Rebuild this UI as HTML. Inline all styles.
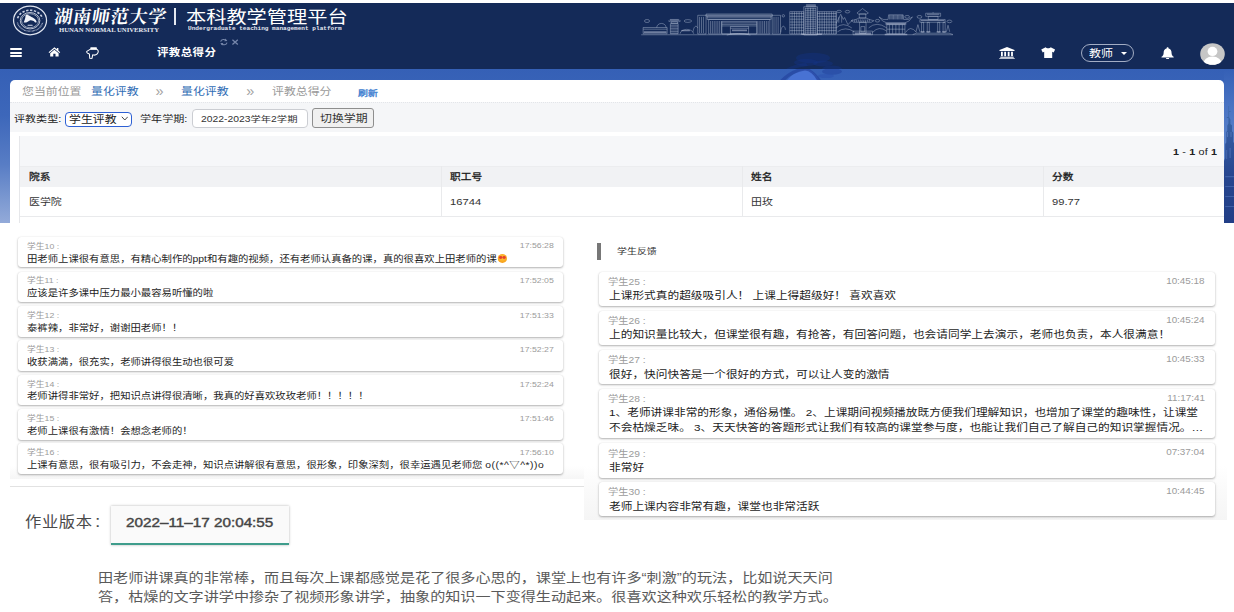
<!DOCTYPE html>
<html lang="zh-CN">
<head>
<meta charset="utf-8">
<title>评教总得分</title>
<style>
*{box-sizing:border-box;margin:0;padding:0}
html{background:#fff}html,body{width:1234px;height:612px;overflow:hidden}
body{position:relative;font-family:"Liberation Sans","Noto Sans CJK SC",sans-serif;color:#222}
.abs{position:absolute}
#hdr{left:0;top:3px;width:1234px;height:66px;background:#142a58;overflow:hidden}
#bluebg{left:0;top:69px;width:1234px;height:154px;background:linear-gradient(180deg,#3560b6 0%,#3d67ba 30%,#587dc5 62%,#7c99d1 85%,#93aad9 100%)}
#rightimg{left:1224px;top:69px;width:10px;height:154px;background:linear-gradient(180deg,#3a66ba 0%,#2f58a8 30%,#27509f 60%,#3159a8 100%)}
#card{left:10px;top:80px;width:1214px;height:143px;background:#fff;border-radius:5px 5px 0 0;overflow:hidden}
.t{position:absolute;white-space:nowrap;line-height:1}

.c{position:absolute;background:#fff;border-radius:3px;box-shadow:0 1px 2.2px rgba(0,0,0,.3),0 0 1px rgba(0,0,0,.12)}
.c .l{position:absolute;white-space:nowrap;line-height:1;color:#9b9b9b}
.c .m{position:absolute;white-space:nowrap;line-height:1;color:#1c1c1c}
.c .tm{position:absolute;white-space:nowrap;line-height:1;color:#9b9b9b;text-align:right}
.L .l{left:9px;top:5.75px;font-size:7.7px;transform:scaleX(1.14);transform-origin:0 50%}
.L .m{left:9px;top:17.3px;font-size:9.09px;transform:scaleX(1.14);transform-origin:0 50%}
.L .tm{right:9px;top:5.6px;font-size:7.65px;transform:scaleX(1.14);transform-origin:100% 50%}
.R .l{left:9.9px;top:6.6px;font-size:8.7px;transform:scaleX(1.18);transform-origin:0 50%}
.R .m{left:10.5px;top:19.79px;font-size:9.92px;transform:scaleX(1.18);transform-origin:0 50%}
.R .tm{right:10.2px;top:5.4px;font-size:8.4px;transform:scaleX(1.18);transform-origin:100% 50%}
.emo{display:inline-block;position:relative;width:8.6px;height:8.4px;border-radius:50%;background:radial-gradient(circle at 50% 40%,#ffc83a 0%,#f8a21c 70%,#ee8d10 100%);vertical-align:-0.6px;margin-left:.6px}
.emo i{position:absolute;top:1.6px;width:3px;height:2.8px;background:#e4402f;border-radius:50% 50% 50% 50%}
.emo i:first-child{left:1px}.emo i:last-child{right:1px}
</style>
</head>
<body>
<div id="hdr" class="abs">
<!-- logo -->
<svg class="abs" style="left:12px;top:1px;width:36px;height:32px" viewBox="0 0 36 32">
<ellipse cx="18.05" cy="16.45" rx="16.5" ry="14.3" fill="none" stroke="#dfe4ef" stroke-width="1.25"/>
<ellipse cx="18.05" cy="16.5" rx="13.2" ry="11.3" fill="none" stroke="#cfd6e6" stroke-width="1.5" stroke-dasharray="2.1 1.1" stroke-dashoffset="1" pathLength="100" opacity=".0"/>
<path d="M5.6 14.2A13 11.2 0 0 1 30.5 14.2" fill="none" stroke="#c9d0e2" stroke-width="1.6" stroke-dasharray="2.4 1.5"/>
<path d="M5.4 18.6A13 11.2 0 0 0 30.7 18.6" fill="none" stroke="#b9c2d8" stroke-width="1.3" stroke-dasharray=".7 .6"/>
<ellipse cx="18.05" cy="16.7" rx="9.8" ry="8.2" fill="none" stroke="#e3e7f1" stroke-width=".8"/>
<ellipse cx="18.05" cy="16.7" rx="8.5" ry="7" fill="none" stroke="#dbe0ec" stroke-width=".6"/>
<path d="M13 11.4L13.6 10.7C14.4 10.2 15.4 10.3 16.2 10.8C17.4 11.3 18.6 12.2 19.6 12.8C21.4 13.7 23.2 14.6 24.2 15.8C24.9 16.7 25.3 17.8 25.4 18.7L23.6 19C23.2 18 22.4 17.2 21.3 16.9C20.3 16.4 19.3 16.2 18.3 16.4C17.2 16.8 16.2 17.5 15.4 18.1L13.7 19H11C11.1 18 11.5 17.1 11.9 16.3C12.3 15.3 12.6 14.3 12.8 13.4Z" fill="#f0f2f8" transform="translate(18.2 14.8) scale(.9) translate(-18.2 -14.8)"/>
<rect x="15.6" y="20.7" width="5" height="1.1" rx=".3" fill="#d9deeb"/>
</svg>
<div class="t" style="left:53px;top:4.9px;font-family:'Liberation Serif','Noto Serif CJK SC',serif;font-weight:700;font-size:18px;letter-spacing:.75px;color:#fff;transform:skewX(-9deg);transform-origin:0 100%">湖南师范大学</div>
<div class="t" style="left:59px;top:25.1px;font-family:'Liberation Serif',serif;font-weight:700;font-size:5.7px;color:#e6e9f2;transform:scaleX(1.176);transform-origin:0 0">HUNAN NORMAL UNIVERSITY</div>
<div class="abs" style="left:174.3px;top:4.8px;width:2px;height:16.8px;background:#e4e8f0"></div>
<div class="t" style="left:185.8px;top:7.1px;font-size:16.8px;color:#fff;font-weight:400;transform:scaleX(1.204);transform-origin:0 50%">本科教学管理平台</div>
<div class="t" style="left:188px;top:24.11px;font-family:'Liberation Mono',monospace;font-weight:700;font-size:5.08px;color:#e6e9f2;transform:scaleX(1.2);transform-origin:0 50%">Undergraduate teaching management platform</div>
<!-- hamburger -->
<div class="abs" style="left:10.2px;top:45.2px;width:12px;height:1.9px;background:#fff;border-radius:1px"></div>
<div class="abs" style="left:10.2px;top:48.75px;width:12px;height:1.9px;background:#fff;border-radius:1px"></div>
<div class="abs" style="left:10.2px;top:52.3px;width:12px;height:1.9px;background:#fff;border-radius:1px"></div>
<!-- home -->
<svg class="abs" style="left:47.8px;top:44.4px;width:12.8px;height:9.8px" viewBox="0 0 26 21">
<path d="M13 0.5 L0.5 11 L2.2 13 L13 4 L23.8 13 L25.5 11 L21.5 7.6 V2 H18.3 V4.9 Z" fill="#fff"/>
<path d="M13 6 L4 13.5 V20.5 H10.6 V14.5 H15.4 V20.5 H22 V13.5 Z" fill="#fff"/>
</svg>
<!-- hand-o-down -->
<svg class="abs" style="left:86.4px;top:43.7px;width:13px;height:12.6px" viewBox="0 0 26 25">
<path d="M9 4.2 L1.6 8.6 C0.8 10.4 2.4 12.6 5.4 13 L6.8 14.2 L7.4 21.5 C7.8 24.2 11.6 24.2 12.2 21.5 L13.4 15.6 C16.5 16.6 20 16 22.4 13.6 C24.4 11.6 24.8 8.6 24 6.6 L21.4 4.2 Z" fill="none" stroke="#fff" stroke-width="2.1" stroke-linejoin="round"/>
<rect x="8.8" y="0.6" width="12.8" height="4.2" rx="0.8" fill="#fff"/>
</svg>
<div class="t" style="left:157px;top:45.26px;font-size:10px;letter-spacing:0.3px;font-weight:700;color:#fff;transform:scaleX(1.15);transform-origin:0 50%">评教总得分</div>
<!-- refresh + close -->
<svg class="abs" style="left:219px;top:35.2px;width:21.5px;height:8.2px" viewBox="0 0 40 15">
<path d="M3 6.5 A6 5 0 0 1 14 5 M15 8.5 A6 5 0 0 1 4 10" fill="none" stroke="#7686aa" stroke-width="2"/>
<path d="M12 1 L15.5 5.5 L10 6 Z M6 14 L2.5 9.5 L8 9 Z" fill="#7686aa"/>
<path d="M25 3 L35 12 M35 3 L25 12" stroke="#7686aa" stroke-width="2.4"/>
</svg>
<!--SKY0--><svg class="abs" style="left:636px;top:-3px;width:322px;height:42px" viewBox="636 0 322 42"><path d="M641.19 34.76L952.94 34.76M644.42 21.01A2.6 1.5 0 1 0 649.62 21.01A2.6 1.5 0 1 0 644.42 21.01ZM643.13 27.5H667.13V33.72H643.13ZM643.13 29.18L667.13 29.18M656.75 27.5A4.6 4 0 0 1 666.09 27.5M670.37 23.61H678.15V33.72H670.37ZM670.37 25.29L678.15 25.29M670.37 26.85L678.15 26.85M670.37 28.4L678.15 28.4M670.37 29.96L678.15 29.96M670.37 31.52L678.15 31.52M670.37 33.07L678.15 33.07M668.17 20.75L669.98 21.79H678.8L680.88 20.75M669.98 19.46H678.8M671.28 21.79H677.5V23.61H671.28ZM684.08 21.01A3.8 1.4 0 1 0 691.68 21.01A3.8 1.4 0 1 0 684.08 21.01ZM680.1 33.72C680.75 27.89 692.42 27.89 693.72 33.72M693.07 31.78C693.72 25.29 696.96 25.29 697.61 27.89M697.74 15.3H706.04V33.98H697.74ZM772.19 15.3H780.49V33.98H772.19ZM699.55 16.86L699.55 33.07M701.5 16.86L701.5 33.07M703.44 16.86L703.44 33.07M774.0 16.86L774.0 33.07M776.08 16.86L776.08 33.07M778.15 16.86L778.15 33.07M706.04 14.01H772.19V16.08H706.04ZM706.04 15.05L772.19 15.05M707.08 16.08H771.15V19.46H707.08ZM707.08 17.77L771.15 17.77M708.63 19.46H769.85V33.98H708.63ZM710.58 21.01L710.58 33.46M712.39 21.01L712.39 33.46M714.21 21.01L714.21 33.46M716.03 21.01L716.03 33.46M717.84 21.01L717.84 33.46M719.66 21.01L719.66 33.46M721.47 21.01L721.47 33.46M757.27 21.01L757.27 33.46M759.09 21.01L759.09 33.46M760.9 21.01L760.9 33.46M762.72 21.01L762.72 33.46M764.53 21.01L764.53 33.46M766.35 21.01L766.35 33.46M768.17 21.01L768.17 33.46M721.86 21.4H756.62V33.98H721.86ZM721.86 22.83L756.62 22.83M721.86 24.38L756.62 24.38M721.86 25.94L756.62 25.94M730.42 26.46H748.58V33.98H730.42ZM730.42 28.27L748.58 28.27M726.79 35.02Q738.46 31.91 750.4 35.02M782.14 15.82A1.2 1.2 0 1 0 784.5400000000001 15.82A1.2 1.2 0 1 0 782.14 15.82ZM780.75 32.43C781.27 24.64 784.9 24.64 785.42 29.83M789.77 11.67H803.78V33.98H789.77ZM817.4 11.67H836.21V33.98H817.4ZM803.78 6.74H817.4V35.02H803.78ZM806.38 4.67H815.46V6.74H806.38ZM789.77 13.49L803.78 13.49M817.4 13.49L836.21 13.49M789.77 16.34L803.78 16.34M817.4 16.34L836.21 16.34M789.77 19.2L803.78 19.2M817.4 19.2L836.21 19.2M789.77 22.05L803.78 22.05M817.4 22.05L836.21 22.05M789.77 24.9L803.78 24.9M817.4 24.9L836.21 24.9M789.77 27.76L803.78 27.76M817.4 27.76L836.21 27.76M789.77 30.61L803.78 30.61M817.4 30.61L836.21 30.61M792.11 11.67L792.11 33.98M794.44 11.67L794.44 33.98M796.78 11.67L796.78 33.98M799.11 11.67L799.11 33.98M801.45 11.67L801.45 33.98M819.74 11.67L819.74 33.98M822.07 11.67L822.07 33.98M824.4 11.67L824.4 33.98M826.74 11.67L826.74 33.98M829.07 11.67L829.07 33.98M831.41 11.67L831.41 33.98M833.74 11.67L833.74 33.98M836.08 11.67L836.08 33.98M805.34 8.56L815.84 8.56M805.34 10.38L815.84 10.38M805.34 12.19L815.84 12.19M805.34 14.01L815.84 14.01M805.34 15.82L815.84 15.82M805.34 17.64L815.84 17.64M805.34 19.46L815.84 19.46M805.34 21.27L815.84 21.27M805.34 23.09L815.84 23.09M805.34 24.9L815.84 24.9M805.34 26.72L815.84 26.72M805.34 28.53L815.84 28.53M805.34 30.35L815.84 30.35M805.34 32.17L815.84 32.17M805.34 7.78L805.34 33.98M807.93 7.78L807.93 33.98M810.53 7.78L810.53 33.98M813.12 7.78L813.12 33.98M815.84 7.78L815.84 33.98M836.76 11.41A2.3 1.1 0 1 0 841.3599999999999 11.41A2.3 1.1 0 1 0 836.76 11.41ZM845.19 11.67A2.3 1.3 0 1 0 849.79 11.67A2.3 1.3 0 1 0 845.19 11.67ZM836.21 23.35L840.75 14.27L843.34 19.46L844.64 17.51L847.88 24.64L853.07 19.46M836.21 27.89Q842.69 21.4 851.77 27.89M837.5 31.78Q845.29 25.94 854.37 31.78M838.8 16.86L838.8 22.7M841.65 16.21L841.65 22.7M862.54 8.56L856.96 12.97L858.26 14.01H866.82L868.37 12.97ZM859.29 14.01H865.78V18.16H859.29ZM851.12 20.75Q856.96 19.46 859.29 17.9H865.78Q868.63 19.46 873.82 20.75L871.23 22.31H853.85ZM855.01 19.46L854.5 22.05M856.83 19.46L856.31 22.05M858.65 19.46L858.13 22.05M860.46 19.46L859.94 22.05M862.28 19.46L861.76 22.05M864.09 19.46L863.57 22.05M865.91 19.46L865.39 22.05M867.73 19.46L867.21 22.05M869.54 19.46L869.02 22.05M859.55 22.31H866.04V33.46H859.55ZM860.85 26.59H864.74V31.78H860.85ZM853.07 31.13H872.52V34.76H853.07ZM868.63 27.89Q876.42 20.75 886.79 27.89M872.52 32.43Q879.01 25.29 886.79 31.13M875.25 20.75A2.2 1.3 0 1 0 879.6500000000001 20.75A2.2 1.3 0 1 0 875.25 20.75ZM879.01 16.86Q882.25 22.05 886.79 22.83H904.95Q909.49 22.05 912.47 16.86Q908.84 20.75 903.65 19.46L903.13 14.79H888.61L888.09 19.46Q882.64 20.75 879.01 16.86ZM889.64 15.05L889.64 19.46M890.94 15.05L890.94 19.46M892.24 15.05L892.24 19.46M893.54 15.05L893.54 19.46M894.83 15.05L894.83 19.46M896.13 15.05L896.13 19.46M897.43 15.05L897.43 19.46M898.72 15.05L898.72 19.46M900.02 15.05L900.02 19.46M901.32 15.05L901.32 19.46M902.61 15.05L902.61 19.46M886.79 24.64H904.95V33.72H886.79ZM889.39 24.64L889.39 33.72M892.63 24.64L892.63 33.72M895.87 24.64L895.87 33.72M899.11 24.64L899.11 33.72M902.36 24.64L902.36 33.72M886.79 29.18L904.95 29.18M904.75 16.86A2.4 1.4 0 1 0 909.55 16.86A2.4 1.4 0 1 0 904.75 16.86ZM905.6 32.43Q910.14 24.64 916.62 32.43M917.08 16.86A2.4 1.4 0 1 0 921.88 16.86A2.4 1.4 0 1 0 917.08 16.86ZM947.0400000000001 21.4A2.4 1.3 0 1 0 951.84 21.4A2.4 1.3 0 1 0 947.0400000000001 21.4ZM925.7 13.23H940.62V16.34H925.7ZM933.09 12.19L933.09 13.23M928.3 16.34H938.02V19.46H928.3ZM919.87 19.46H945.16V22.31H919.87ZM921.55 22.31H923.63V32.17H921.55ZM927.26 22.31H929.33V32.17H927.26ZM937.63 22.31H939.71V32.17H937.63ZM943.08 22.31H945.16V32.17H943.08ZM912.73 34.5L916.62 33.2H949.05L952.94 34.5M915.97 31.78L917.92 24.64L919.87 31.78M946.45 31.78L948.01 25.29L949.7 31.78" fill="none" stroke="#c9d2e6" stroke-opacity=".7" stroke-width=".55"/><path d="M643.78 31.13H666.48V32.94H643.78ZM669.46 19.71H679.58V20.75H669.46ZM681.4 30.09H689.83V31.13H681.4ZM731.98 29.57H747.02V31.13H731.98ZM806.89 5.19H814.94V6.23H806.89ZM801.19 33.46H821.94V35.02H801.19ZM854.63 32.43H871.23V34.5H854.63ZM885.49 22.83H906.25V24.64H885.49ZM884.72 33.72H907.28V35.28H884.72ZM927.0 13.75H939.32V14.79H927.0ZM920.77 19.97H944.38V21.01H920.77ZM920.51 31.13H924.66V32.43H920.51ZM926.22 31.13H930.37V32.43H926.22ZM936.6 31.13H940.75V32.43H936.6ZM942.04 31.13H946.19V32.43H942.04Z" fill="#c9d2e6" fill-opacity=".5"/></svg><!--SKY1-->
<!-- bank -->
<svg class="abs" style="left:999px;top:43.5px;width:16px;height:12.5px" viewBox="0 0 32 25">
<path d="M16 0 L1 6 V8 H31 V6 Z" fill="#fff"/>
<rect x="4" y="9.5" width="3.6" height="9" fill="#fff"/><rect x="10.5" y="9.5" width="3.6" height="9" fill="#fff"/><rect x="17.5" y="9.5" width="3.6" height="9" fill="#fff"/><rect x="24.2" y="9.5" width="3.6" height="9" fill="#fff"/>
<rect x="2.5" y="19.5" width="27" height="2" fill="#fff"/><rect x="0.5" y="22.6" width="31" height="2.2" fill="#fff"/>
</svg>
<!-- shirt -->
<svg class="abs" style="left:1041px;top:43.8px;width:14.4px;height:11.6px" viewBox="0 0 29 23">
<path d="M9.5 0.5 C11 3.2 18 3.2 19.5 0.5 L28.5 5 L25.5 10.8 L22.6 9.5 V22.5 H6.4 V9.5 L3.5 10.8 L0.5 5 Z" fill="#fff"/>
</svg>
<!-- role pill -->
<div class="abs" style="left:1081px;top:41px;width:53px;height:17.6px;border:1.6px solid #a3adc4;border-radius:9px"></div>
<div class="t" style="left:1088.5px;top:45.60px;font-size:10px;color:#fff;transform:scaleX(1.2);transform-origin:0 50%">教师</div>
<div class="abs" style="left:1120.5px;top:48.6px;width:0;height:0;border-left:3.3px solid transparent;border-right:3.3px solid transparent;border-top:3.6px solid #fff"></div>
<!-- bell -->
<svg class="abs" style="left:1160.5px;top:43.6px;width:13.2px;height:12.8px" viewBox="0 0 26 25">
<path d="M13 0.5 C14.2 0.5 15 1.4 15 2.6 C19 3.6 20.8 7 20.8 11 C20.8 15.5 22.5 17.5 25 19.3 V20.6 H1 V19.3 C3.5 17.5 5.2 15.5 5.2 11 C5.2 7 7 3.6 11 2.6 C11 1.4 11.8 0.5 13 0.5 Z" fill="#fff"/>
<path d="M10 21.8 H16 C16 23.6 14.7 24.7 13 24.7 C11.3 24.7 10 23.6 10 21.8 Z" fill="#fff"/>
</svg>
<!-- avatar -->
<svg class="abs" style="left:1199.6px;top:40px;width:25px;height:22px" viewBox="0 0 25 22">
<defs><clipPath id="avc"><ellipse cx="12.5" cy="11" rx="12.3" ry="10.8"/></clipPath></defs>
<ellipse cx="12.5" cy="11" rx="12.3" ry="10.8" fill="#c6c6c6"/>
<g clip-path="url(#avc)"><ellipse cx="12.5" cy="8.4" rx="4.9" ry="4.6" fill="#fff"/><ellipse cx="12.5" cy="21.5" rx="9.4" ry="8" fill="#fff"/></g>
</svg>
</div>
<div id="bluebg" class="abs"></div>
<svg id="rightimg" class="abs" style="left:1224px;top:69px;width:10px;height:154px" viewBox="1224 69 10 154">
<defs><linearGradient id="skyg" x1="0" y1="0" x2="0" y2="1"><stop offset="0" stop-color="#3560b6"/><stop offset=".25" stop-color="#4a74c3"/><stop offset=".5" stop-color="#5b83cb"/><stop offset="1" stop-color="#6a8fd0"/></linearGradient>
<linearGradient id="twg" x1="0" y1="0" x2="0" y2="1"><stop offset="0" stop-color="#3f6cab"/><stop offset=".3" stop-color="#31569d"/><stop offset=".6" stop-color="#27468f"/><stop offset="1" stop-color="#223e86"/></linearGradient></defs>
<rect x="1224" y="69" width="10" height="154" fill="url(#skyg)"/>
<path d="M1228.4 106h.7v5h1.6v.8h-1.6v5.5l1.3 2.2v4.5l1.6 1.2v6l1.2 1.4v9.5l.8 1V223H1224v-62l1.2-3v-14l1.1-1.5v-10.5l1-1.2v-5.2l1.1-2.2v-5.5h-1.6v-.8h1.6z" fill="url(#twg)"/>
<path d="M1226 150h1.2v9H1226zM1229.4 148h1.5v10h-1.5zM1225.2 176h8.8v1.2h-8.8zM1225.2 186h8.8v1h-8.8zM1225.2 196h8.8v1h-8.8zM1225.2 206h8.8v1h-8.8z" fill="#486bb2" fill-opacity=".7"/>
<path d="M1227 132h1v5h-1zM1230.5 132h1v5h-1z" fill="#5578be" fill-opacity=".8"/>
</svg>
<svg class="abs" style="left:776px;top:48px;width:72px;height:33px;z-index:1" viewBox="776 48 72 33">
<defs><clipPath id="tc1"><rect x="776" y="48" width="72" height="21"/></clipPath><clipPath id="tc2"><rect x="776" y="69" width="72" height="11.2"/></clipPath></defs>
<g clip-path="url(#tc1)" fill="#13348a" fill-opacity=".36">
<ellipse cx="813" cy="58" rx="17" ry="5.2"/><ellipse cx="806" cy="62.5" rx="12" ry="3.6"/><ellipse cx="823" cy="63.5" rx="10" ry="3"/><ellipse cx="832" cy="69" rx="10" ry="3.6"/>
<path d="M786 69Q794 64 806 63L808 66Q798 67 790 70Z"/>
</g>
<g clip-path="url(#tc2)">
<path d="M787 80.2Q796 70 806 69.5Q814 70 819 80.2Z" fill="#4f78dc" fill-opacity=".75"/>
<path d="M780 80.2Q792 68 806 67.5Q814 70 821 80.2H817Q812 71 805 70.5Q794 72 785 80.2Z" fill="#2546a0" fill-opacity=".75"/>
<ellipse cx="832" cy="71.5" rx="10" ry="3.2" fill="#2546a0" fill-opacity=".6"/><ellipse cx="826" cy="76" rx="8" ry="2" fill="#2a4eac" fill-opacity=".45"/>
</g>
</svg>
<div id="card" class="abs" style="z-index:2">
<div class="abs" style="left:0;top:22px;width:1214px;height:30px;background:#f5f6f8;border-top:1px dotted #e3e5e9"></div>
<!-- breadcrumb (coords relative to card: x-10, y-80) -->
<div class="t" style="left:12px;top:7.49px;font-size:9.92px;color:#9a9a9a;transform:scaleX(1.2);transform-origin:0 50%">您当前位置</div>
<div class="t" style="left:81px;top:7.49px;font-size:9.92px;color:#2f6db5;transform:scaleX(1.2);transform-origin:0 50%">量化评教</div>
<div class="t" style="left:145.6px;top:3.5px;font-size:14.5px;color:#a2a2a2;transform:scaleX(1.0);transform-origin:0 50%">»</div>
<div class="t" style="left:171px;top:7.49px;font-size:9.92px;color:#2f6db5;transform:scaleX(1.2);transform-origin:0 50%">量化评教</div>
<div class="t" style="left:236.3px;top:3.5px;font-size:14.5px;color:#a2a2a2;transform:scaleX(1.0);transform-origin:0 50%">»</div>
<div class="t" style="left:262px;top:7.49px;font-size:9.92px;color:#9a9a9a;transform:scaleX(1.2);transform-origin:0 50%">评教总得分</div>
<div class="t" style="left:347.5px;top:9.82px;font-size:8.25px;font-weight:400;color:#3a7ccf;-webkit-text-stroke:.3px #3a7ccf;transform:scaleX(1.2);transform-origin:0 50%">刷新</div>
<!-- filter row -->
<div class="t" style="left:4.2px;top:35.19px;font-size:8.92px;color:#222;transform:scaleX(1.24);transform-origin:0 50%">评教类型:</div>
<div class="abs" style="left:54.6px;top:31.5px;width:67px;height:15px;border:1.9px solid #2d60d4;border-radius:4px;background:#fff"></div>
<div class="t" style="left:59.3px;top:35.39px;font-size:9.92px;color:#222;transform:scaleX(1.2);transform-origin:0 50%">学生评教</div>
<svg class="abs" style="left:110.5px;top:36.4px;width:7.6px;height:5px" viewBox="0 0 15 10"><path d="M1.5 1.5 L7.5 8 L13.5 1.5" fill="none" stroke="#333" stroke-width="1.8"/></svg>
<div class="t" style="left:130.4px;top:35.19px;font-size:8.92px;color:#222;transform:scaleX(1.245);transform-origin:0 50%">学年学期:</div>
<div class="abs" style="left:181.5px;top:29.3px;width:116.5px;height:18.8px;border:1px solid #cbcdd2;border-radius:4px;background:#fff"></div>
<div class="t" style="left:191.2px;top:35.45px;font-size:8.46px;color:#333;transform:scaleX(1.222);transform-origin:0 50%">2022-2023学年2学期</div>
<div class="abs" style="left:302.3px;top:28.2px;width:61.8px;height:20.3px;border:1px solid #8e8e8e;border-radius:3px;background:#f0f0f0"></div>
<div class="t" style="left:310px;top:34.3px;font-size:9.92px;color:#333;transform:scaleX(1.2);transform-origin:0 50%">切换学期</div>
<!-- table -->
<div class="abs" style="left:8.5px;top:56px;width:1210px;height:30px;background:#f6f7f9"></div>
<div class="t" style="right:6.5px;top:67.25px;font-size:9.8px;letter-spacing:0.15px;color:#222;transform:scaleX(1.1);transform-origin:100% 50%"><b>1</b> - <b>1</b> of <b>1</b></div>
<div class="abs" style="left:8.5px;top:86px;width:1210px;height:21px;background:#f1f2f4;border-top:1px solid #ecedef"></div>
<div class="abs" style="left:8.5px;top:107px;width:1210px;height:29.5px;background:#fff;border-bottom:1px solid #e9eaec;border-left:1px solid #eeeff1"></div>
<div class="abs" style="left:8.5px;top:56px;width:1px;height:87px;background:#e6e7ea"></div>
<div class="abs" style="left:431px;top:86px;width:1px;height:50px;background:#e9eaec"></div>
<div class="abs" style="left:732px;top:86px;width:1px;height:50px;background:#e9eaec"></div>
<div class="abs" style="left:1032.5px;top:86px;width:1px;height:50px;background:#e9eaec"></div>
<div class="t" style="left:18.5px;top:93.19px;font-size:8.92px;font-weight:400;color:#1a1a1a;-webkit-text-stroke:.28px #1a1a1a;transform:scaleX(1.2);transform-origin:0 50%">院系</div>
<div class="t" style="left:440px;top:93.19px;font-size:8.92px;font-weight:400;color:#1a1a1a;-webkit-text-stroke:.28px #1a1a1a;transform:scaleX(1.2);transform-origin:0 50%">职工号</div>
<div class="t" style="left:741px;top:93.19px;font-size:8.92px;font-weight:400;color:#1a1a1a;-webkit-text-stroke:.28px #1a1a1a;transform:scaleX(1.2);transform-origin:0 50%">姓名</div>
<div class="t" style="left:1042px;top:93.19px;font-size:8.92px;font-weight:400;color:#1a1a1a;-webkit-text-stroke:.28px #1a1a1a;transform:scaleX(1.2);transform-origin:0 50%">分数</div>
<div class="t" style="left:18.5px;top:118.01px;font-size:9.08px;color:#333;transform:scaleX(1.2);transform-origin:0 50%">医学院</div>
<div class="t" style="left:440px;top:116.62px;font-size:9.7px;color:#333;transform:scaleX(1.155);transform-origin:0 50%">16744</div>
<div class="t" style="left:741px;top:118.01px;font-size:9.08px;color:#333;transform:scaleX(1.2);transform-origin:0 50%">田玫</div>
<div class="t" style="left:1042px;top:116.62px;font-size:9.7px;color:#333;transform:scaleX(1.155);transform-origin:0 50%">99.77</div>
</div>
<!-- left feedback screenshot -->
<div class="c L" style="left:18px;top:236.9px;width:545px;height:30.4px"><div class="l">学生10 :</div><div class="tm">17:56:28</div><div class="m">田老师上课很有意思，有精心制作的ppt和有趣的视频，还有老师认真备的课，真的很喜欢上田老师的课<span class="emo"><i></i><i></i></span></div></div>
<div class="c L" style="left:18px;top:271.6px;width:545px;height:30.4px"><div class="l">学生11 :</div><div class="tm">17:52:05</div><div class="m">应该是许多课中压力最小最容易听懂的啦</div></div>
<div class="c L" style="left:18px;top:306.3px;width:545px;height:30.4px"><div class="l">学生12 :</div><div class="tm">17:51:33</div><div class="m">泰裤辣，非常好，谢谢田老师！！</div></div>
<div class="c L" style="left:18px;top:340.3px;width:545px;height:30.4px"><div class="l">学生13 :</div><div class="tm">17:52:27</div><div class="m">收获满满，很充实，老师讲得很生动也很可爱</div></div>
<div class="c L" style="left:18px;top:375.0px;width:545px;height:30.4px"><div class="l">学生14 :</div><div class="tm">17:52:24</div><div class="m">老师讲得非常好，把知识点讲得很清晰，我真的好喜欢玫玫老师！！！！！</div></div>
<div class="c L" style="left:18px;top:409.4px;width:545px;height:30.4px"><div class="l">学生15 :</div><div class="tm">17:51:46</div><div class="m">老师上课很有激情！会想念老师的！</div></div>
<div class="c L" style="left:18px;top:443.3px;width:545px;height:30.4px"><div class="l">学生16 :</div><div class="tm">17:56:10</div><div class="m">上课有意思，很有吸引力，不会走神，知识点讲解很有意思，很形象，印象深刻，很幸运遇见老师您 <span style="letter-spacing:.45px">o((*^▽^*))o</span></div></div>
<div class="abs" style="left:10px;top:466px;width:573.5px;height:12.5px;background:linear-gradient(180deg,#fff,#f6f6f6);z-index:-1"></div><div class="abs" style="left:10px;top:485.5px;width:573.5px;height:1px;background:#e2e2e2"></div>
<!-- right feedback screenshot -->
<div class="abs" style="left:583.5px;top:466px;width:643.5px;height:53.5px;background:linear-gradient(180deg,#fff 0%,#fafafa 45%,#f5f5f5 100%);z-index:-1"></div>
<div class="abs" style="left:596.5px;top:242.5px;width:4.3px;height:17.3px;background:#777"></div>
<div class="t" style="left:617px;top:248.23px;font-size:8.14px;color:#333;transform:scaleX(1.225);transform-origin:0 50%">学生反馈</div>
<div class="c R" style="left:598.5px;top:271.5px;width:616.5px;height:34.6px"><div class="l">学生25 :</div><div class="tm">10:45:18</div><div class="m">上课形式真的超级吸引人！ 上课上得超级好！ 喜欢喜欢</div></div>
<div class="c R" style="left:598.5px;top:310.7px;width:616.5px;height:34.6px"><div class="l">学生26 :</div><div class="tm">10:45:24</div><div class="m">上的知识量比较大，但课堂很有趣，有抢答，有回答问题，也会请同学上去演示，老师也负责，本人很满意！</div></div>
<div class="c R" style="left:598.5px;top:349.8px;width:616.5px;height:34.6px"><div class="l">学生27 :</div><div class="tm">10:45:33</div><div class="m">很好，快问快答是一个很好的方式，可以让人变的激情</div></div>
<div class="c R" style="left:598.5px;top:388.6px;width:616.5px;height:49.5px"><div class="l">学生28 :</div><div class="tm">11:17:41</div><div class="m">1、老师讲课非常的形象，通俗易懂。 2、上课期间视频播放既方便我们理解知识，也增加了课堂的趣味性，让课堂</div><div class="m" style="top:34.5px">不会枯燥乏味。 3、天天快答的答题形式让我们有较高的课堂参与度，也能让我们自己了解自己的知识掌握情况。…</div></div>
<div class="c R" style="left:598.5px;top:443px;width:616.5px;height:34.6px"><div class="l">学生29 :</div><div class="tm">07:37:04</div><div class="m">非常好</div></div>
<div class="c R" style="left:598.5px;top:481.8px;width:616.5px;height:34.6px"><div class="l">学生30 :</div><div class="tm">10:44:45</div><div class="m">老师上课内容非常有趣，课堂也非常活跃</div></div>
<!-- homework version -->
<div class="t" style="left:24.8px;top:513.30px;font-size:14.3px;letter-spacing:0.53px;color:#4a4a4a;transform:scaleX(1.14);transform-origin:0 50%">作业版本<span style="display:inline-block;margin-left:2.2px;font-size:17px;position:relative;top:-.6px">:</span></div>
<div class="abs" style="left:111px;top:506px;width:177.5px;height:39.3px;background:#fafafa;border-bottom:2.2px solid #3f9d8c;box-shadow:0 0 2.5px rgba(0,0,0,.3)"></div>
<div class="t" style="left:126.2px;top:516.9px;font-size:12.8px;font-weight:400;color:#444;-webkit-text-stroke:.4px #444;transform:scaleX(1.192);transform-origin:0 50%">2022–11–17 20:04:55</div>
<div class="t" style="left:98px;top:568.40px;font-size:13.02px;line-height:19px;color:#5a5a5a;white-space:nowrap;transform:scaleX(1.16);transform-origin:0 50%">田老师讲课真的非常棒，而且每次上课都感觉是花了很多心思的，课堂上也有许多“刺激”的玩法，比如说天天问<br>答，枯燥的文字讲学中掺杂了视频形象讲学，抽象的知识一下变得生动起来。很喜欢这种欢乐轻松的教学方式。</div>
</body>
</html>
